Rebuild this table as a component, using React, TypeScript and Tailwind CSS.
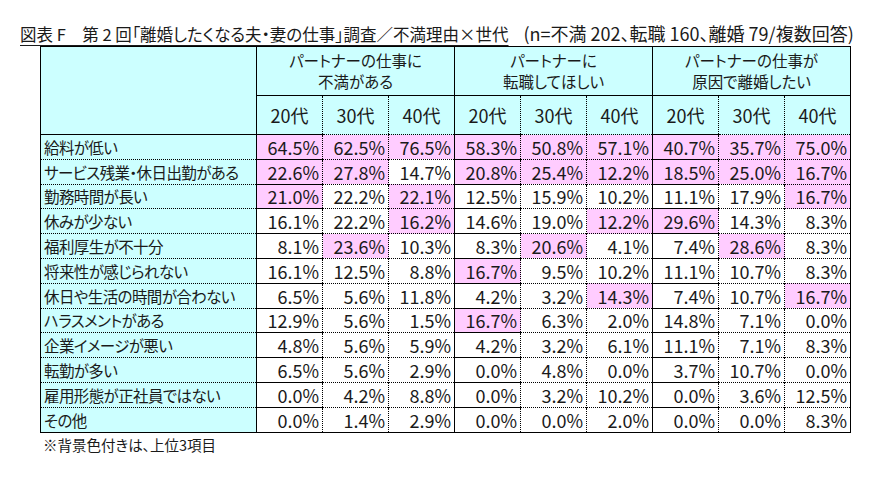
const font = { fontFamily: '"Noto Sans CJK JP", "Noto Sans", sans-serif' }

const groups = ['パートナーの仕事に\n不満がある', 'パートナーに\n転職してほしい', 'パートナーの仕事が\n原因で離婚したい']
const ages = ['20代', '30代', '40代']

const rows: { label: string; values: string[]; top: number[] }[] = [
  { label: '給料が低い', values: ['64.5', '62.5', '76.5', '58.3', '50.8', '57.1', '40.7', '35.7', '75.0'], top: [0, 1, 2, 3, 4, 5, 6, 7, 8] },
  { label: 'サービス残業・休日出勤がある', values: ['22.6', '27.8', '14.7', '20.8', '25.4', '12.2', '18.5', '25.0', '16.7'], top: [0, 1, 3, 4, 5, 6, 7, 8] },
  { label: '勤務時間が長い', values: ['21.0', '22.2', '22.1', '12.5', '15.9', '10.2', '11.1', '17.9', '16.7'], top: [0, 2, 8] },
  { label: '休みが少ない', values: ['16.1', '22.2', '16.2', '14.6', '19.0', '12.2', '29.6', '14.3', '8.3'], top: [2, 5, 6] },
  { label: '福利厚生が不十分', values: ['8.1', '23.6', '10.3', '8.3', '20.6', '4.1', '7.4', '28.6', '8.3'], top: [1, 4, 7] },
  { label: '将来性が感じられない', values: ['16.1', '12.5', '8.8', '16.7', '9.5', '10.2', '11.1', '10.7', '8.3'], top: [3] },
  { label: '休日や生活の時間が合わない', values: ['6.5', '5.6', '11.8', '4.2', '3.2', '14.3', '7.4', '10.7', '16.7'], top: [5, 8] },
  { label: 'ハラスメントがある', values: ['12.9', '5.6', '1.5', '16.7', '6.3', '2.0', '14.8', '7.1', '0.0'], top: [3] },
  { label: '企業イメージが悪い', values: ['4.8', '5.6', '5.9', '4.2', '3.2', '6.1', '11.1', '7.1', '8.3'], top: [] },
  { label: '転勤が多い', values: ['6.5', '5.6', '2.9', '0.0', '4.8', '0.0', '3.7', '10.7', '0.0'], top: [] },
  { label: '雇用形態が正社員ではない', values: ['0.0', '4.2', '8.8', '0.0', '3.2', '10.2', '0.0', '3.6', '12.5'], top: [] },
  { label: 'その他', values: ['0.0', '1.4', '2.9', '0.0', '0.0', '2.0', '0.0', '0.0', '8.3'], top: [] },
]

export default function App() {
  return (
    <div className="w-[881px] h-[479px] bg-white text-[#1a1a1a] [font-feature-settings:'palt']" style={font}>
      {/* Title */}
      <div className="pt-[22px] pl-[20px] h-[46px] leading-[22px] whitespace-nowrap flex items-baseline">
        <span className="text-[16.5px] underline underline-offset-[4px] decoration-1">図表 F　第 2 回「離婚したくなる夫・妻の仕事」調査／不満理由×世代</span>
        <span className="ml-[15px] text-[18px]">(n=不満 202、転職 160、離婚 79/複数回答)</span>
      </div>

      <table className="ml-[40px] w-[810px] table-fixed border-collapse border border-black">
        <colgroup>
          <col className="w-[216px]" />
          {Array.from({ length: 9 }).map((_, i) => (
            <col key={i} className="w-[66px]" />
          ))}
        </colgroup>
        <thead>
          <tr className="h-[49px]">
            <th rowSpan={2} className="bg-[#ccffff] border border-black"></th>
            {groups.map((g) => (
              <th key={g} colSpan={3} className="bg-[#ccffff] border border-black font-normal text-[15.5px] leading-[21px] whitespace-pre-line">
                {g}
              </th>
            ))}
          </tr>
          <tr className="h-[39px]">
            {[0, 1, 2].map((g) =>
              ages.map((a, i) => (
                <th
                  key={`${g}-${a}`}
                  className={`bg-[#ccffff] font-normal text-[18px] border-y border-y-black ${
                    i === 0 ? 'border-l border-l-black' : 'border-l border-dotted border-l-black'
                  }`}
                >
                  {a}
                </th>
              ))
            )}
          </tr>
        </thead>
        <tbody>
          {rows.map((r, ri) => (
            <tr key={r.label} className="h-[24.8px]">
              <td
                className={`bg-[#ccffff] border-r border-r-black pl-[3px] text-[15.5px] tracking-[-0.6px] leading-[20px] whitespace-nowrap ${
                  ri > 0 ? 'border-t border-dotted border-t-black' : ''
                }`}
              >
                {r.label}
              </td>
              {r.values.map((v, ci) => (
                <td
                  key={ci}
                  className={`text-right pr-[3px] text-[18px] leading-[20px] ${r.top.includes(ci) ? 'bg-[#ffccff]' : 'bg-white'} ${
                    ci % 3 === 0 ? 'border-l border-solid border-l-black' : 'border-l border-dotted border-l-black'
                  } ${ri > 0 ? 'border-t border-dotted border-t-black' : ''}`}
                >
                  {v}%
                </td>
              ))}
            </tr>
          ))}
        </tbody>
      </table>

      <div className="pl-[43px] pt-[2px] text-[14.5px] leading-[20px]">※背景色付きは、上位3項目</div>
    </div>
  )
}
